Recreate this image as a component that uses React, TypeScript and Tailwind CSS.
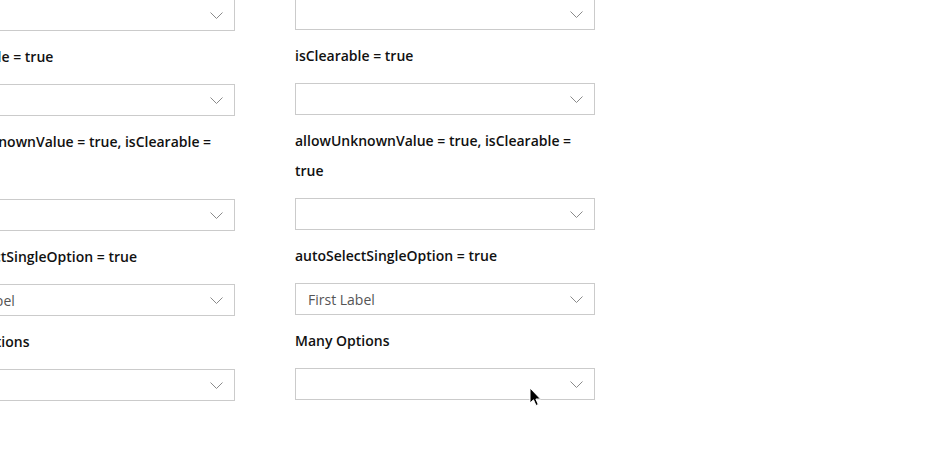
import React from 'react';

interface FieldProps {
  label?: string;
  value?: string;
}

const Chevron: React.FC = () => (
  <svg width="13" height="7" viewBox="0 0 13 7" fill="none" className="shrink-0">
    <path d="M0.5 0.5 L6.5 6.5 L12.5 0.5" stroke="#8a8a8a" strokeWidth="1" />
  </svg>
);

const SelectBox: React.FC<{ value?: string }> = ({ value }) => (
  <div className="h-[32px] w-[300px] border border-[#cbcbcb] bg-white flex items-center justify-between pl-[12px] pr-[11px]">
    <span className="text-[14px] text-[#555555]">{value}</span>
    <Chevron />
  </div>
);

const Field: React.FC<FieldProps> = ({ label, value }) => (
  <div className="flex flex-col">
    {label && (
      <div className="mt-[11px] mb-[12px] text-[14px] font-semibold leading-[30px] text-[#111111]">
        {label}
      </div>
    )}
    <SelectBox value={value} />
  </div>
);

const fields: FieldProps[] = [
  {},
  { label: 'isClearable = true' },
  { label: 'allowUnknownValue = true, isClearable = true' },
  { label: 'autoSelectSingleOption = true', value: 'First Label' },
  { label: 'Many Options' },
];

// the left column is scrolled partly out of view, as in the page
const Column: React.FC<{ className?: string }> = ({ className }) => (
  <div className={`w-[300px] flex flex-col ${className ?? ''}`}>
    {fields.map((f, i) => (
      <Field key={i} {...f} />
    ))}
  </div>
);

const Cursor: React.FC = () => (
  <svg
    width="14"
    height="21"
    viewBox="0 0 14 21"
    className="absolute left-[529px] top-[387px]"
  >
    <path
      d="M1 1 L1 16 L4.5 12.8 L7 18.5 L9.3 17.5 L6.9 12 L11.5 12 Z"
      fill="#000"
      stroke="#fff"
      strokeWidth="1"
      strokeLinejoin="round"
    />
  </svg>
);

export default function App() {
  return (
    <div
      className="relative w-[937px] h-[454px] overflow-hidden bg-white"
      style={{ fontFamily: '"Open Sans", "Noto Sans", sans-serif' }}
    >
      <div className="flex gap-[60px] ml-[-65px] mt-[-2px]">
        <Column className="mt-[1px]" />
        <Column />
      </div>
      <Cursor />
    </div>
  );
}
